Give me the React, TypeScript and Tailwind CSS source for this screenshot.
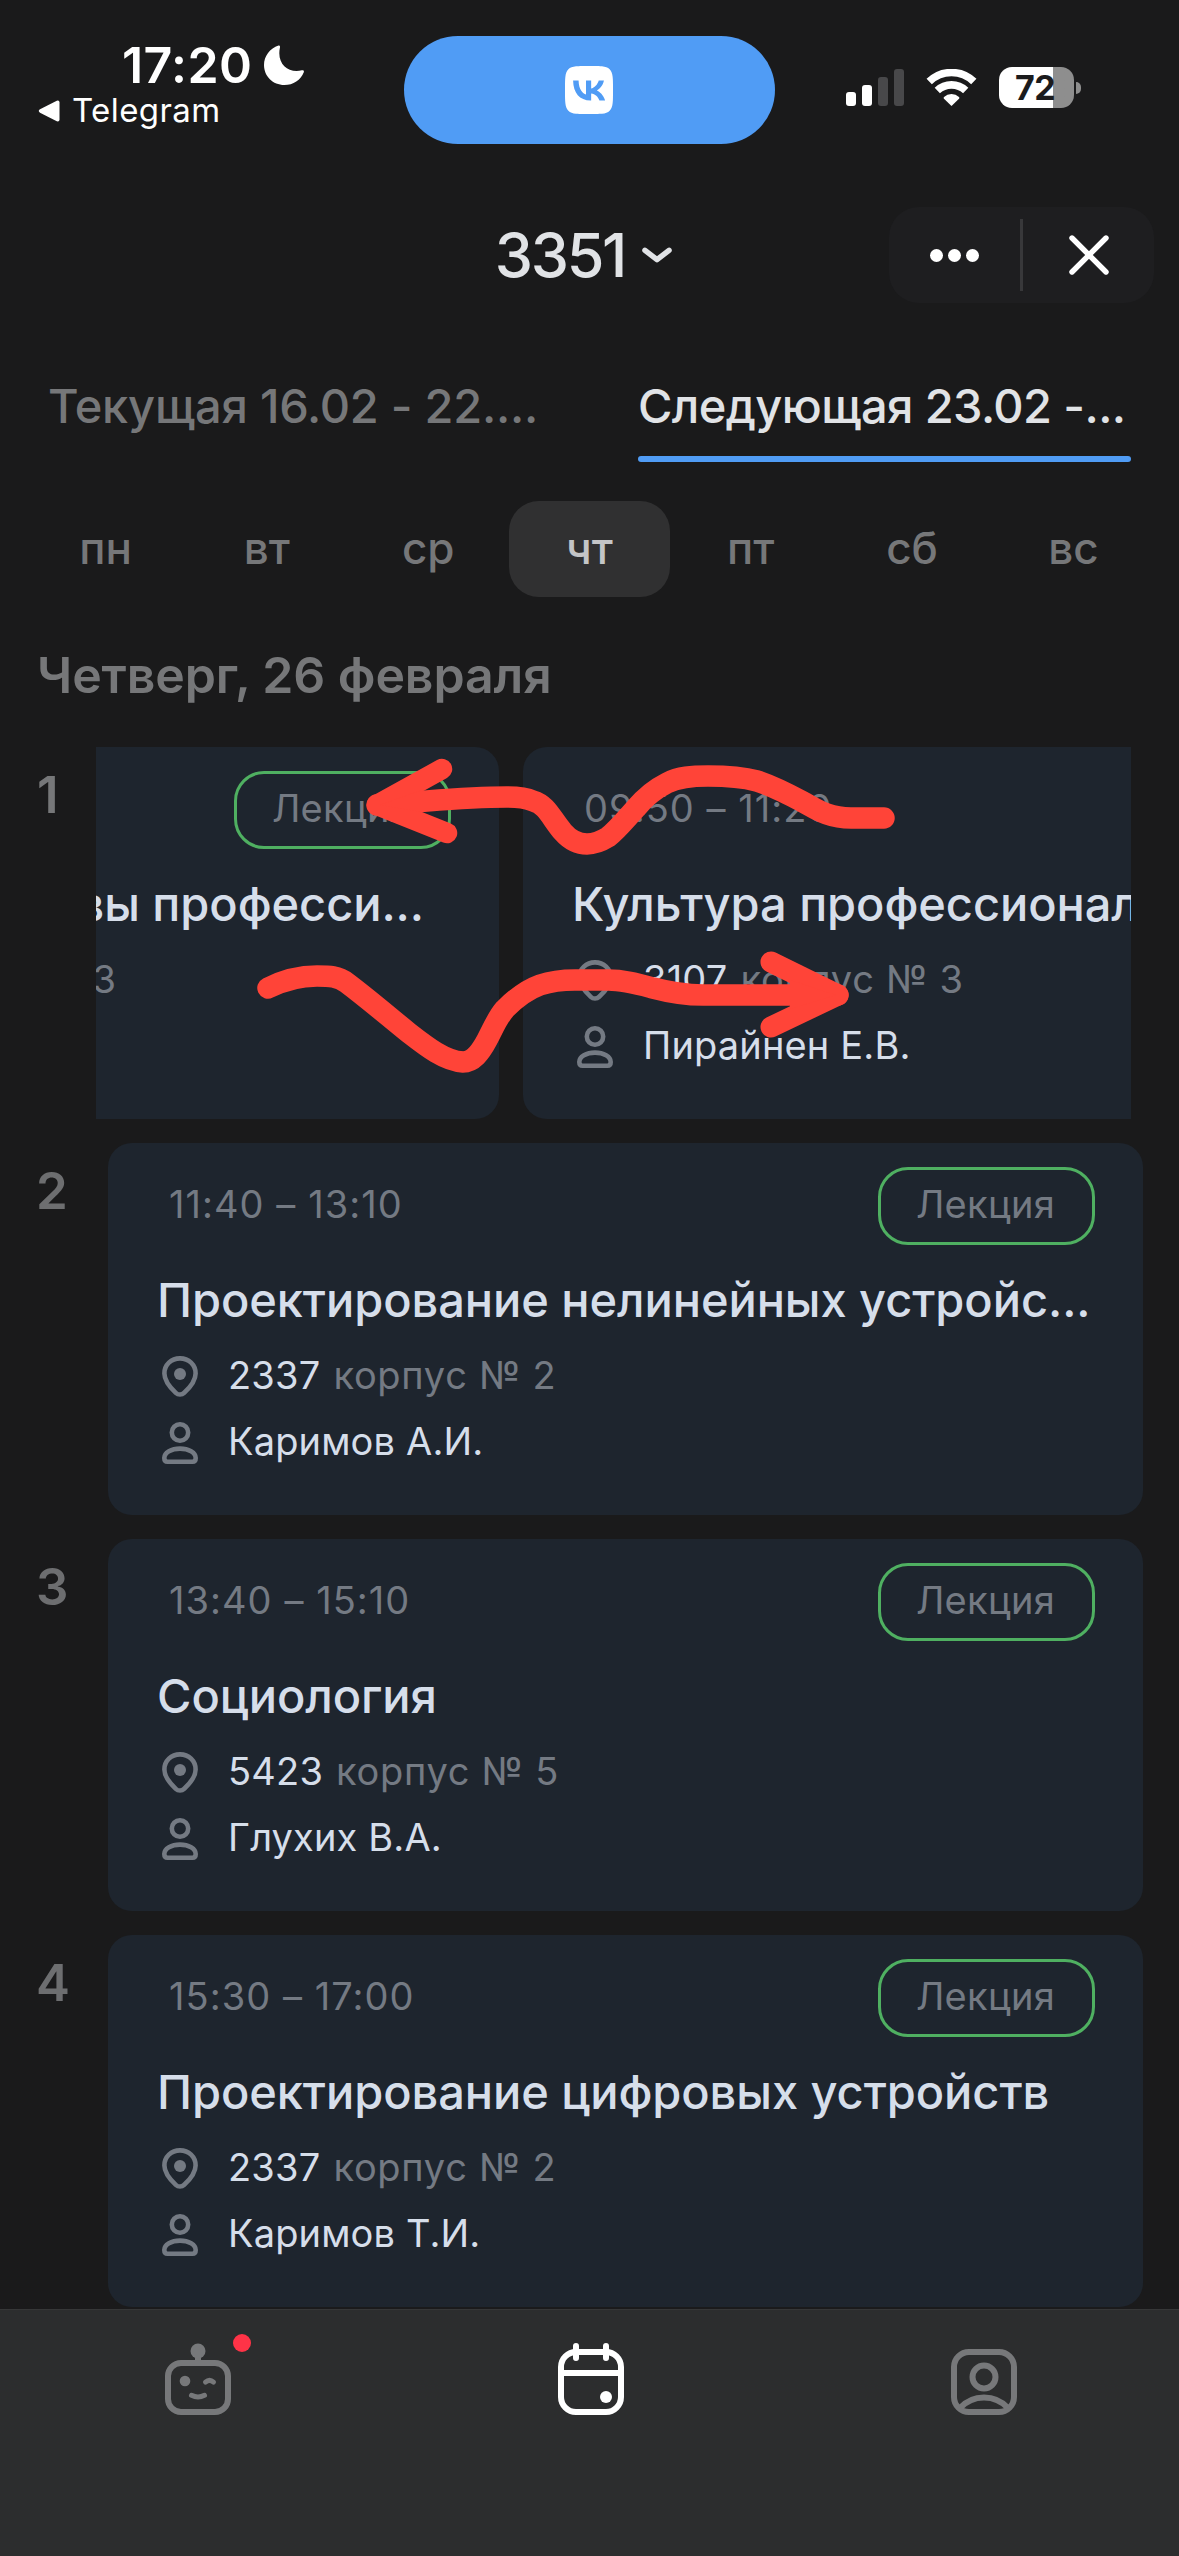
import { SiVk } from 'react-icons/si';

interface Lesson {
  time: string;
  kind: string;
  title: string;
  room: string;
  building: string;
  teacher: string;
  clipped?: boolean;
}

interface Slot {
  number: number;
  lessons: Lesson[];
}

const weekDays = ['пн', 'вт', 'ср', 'чт', 'пт', 'сб', 'вс'];
const activeDay = 'чт';

const slots: Slot[] = [
  {
    number: 1,
    lessons: [
      {
        time: '09:50 – 11:20',
        kind: 'Лекция',
        title: 'Психологические основы професси...',
        room: '3102, 3109, 3110',
        building: 'корпус № 3',
        teacher: 'Пирайнен Е.В.',
        clipped: true,
      },
      {
        time: '09:50 – 11:20',
        kind: 'Лекция',
        title: 'Культура профессионального общения',
        room: '3107',
        building: 'корпус № 3',
        teacher: 'Пирайнен Е.В.',
      },
    ],
  },
  {
    number: 2,
    lessons: [
      {
        time: '11:40 – 13:10',
        kind: 'Лекция',
        title: 'Проектирование нелинейных устройс...',
        room: '2337',
        building: 'корпус № 2',
        teacher: 'Каримов А.И.',
      },
    ],
  },
  {
    number: 3,
    lessons: [
      {
        time: '13:40 – 15:10',
        kind: 'Лекция',
        title: 'Социология',
        room: '5423',
        building: 'корпус № 5',
        teacher: 'Глухих В.А.',
      },
    ],
  },
  {
    number: 4,
    lessons: [
      {
        time: '15:30 – 17:00',
        kind: 'Лекция',
        title: 'Проектирование цифровых устройств',
        room: '2337',
        building: 'корпус № 2',
        teacher: 'Каримов Т.И.',
      },
    ],
  },
];

function PinIcon() {
  return (
    <svg viewBox="0 0 48 48" className="w-12 h-12 shrink-0" fill="none">
      <path
        d="M24 5.4c8.8 0 15.6 6.500 15.600 15 0 6.600-4.800 13.200-11.400 19.400a6.100 6.100 0 0 1-8.400 0C13.200 33.600 8.400 27 8.400 20.400c0-8.500 6.800-15 15.600-15z"
        stroke="#747a83"
        strokeWidth="4.600"
      />
      <circle cx="24" cy="21" r="6" fill="#747a83" />
    </svg>
  );
}

function PersonIcon() {
  return (
    <svg viewBox="0 0 48 48" className="w-12 h-12 shrink-0" fill="none" stroke="#747a83" strokeWidth="4.600">
      <circle cx="24" cy="13.500" r="8.200" />
      <path d="M24 29.600c8.600 0 15.700 4 15.700 9.400 0 2.500-1.200 3.700-3.200 3.700h-25c-2 0-3.200-1.200-3.200-3.700 0-5.400 7.100-9.400 15.700-9.400z" />
    </svg>
  );
}

function StatusBar() {
  return (
    <div className="h-[180px] shrink-0 flex justify-between text-white">
      <div className="w-[404px] pt-[35px] pl-[38px]">
        <div className="flex items-center gap-3 pl-[84px] h-[60px]">
          <span className="text-[50px] leading-none font-semibold tracking-[0.4px]">17:20</span>
          <svg viewBox="0 0 40 40" className="w-10 h-10">
            <path
              d="M14.500.5C6 3.500 0 11 0 20c0 11.300 9 20 20.300 20 9 0 16.500-5 19.500-12.800.5-1.300-.5-2.300-1.900-1.900-13.500 3.500-25.400-6.500-22-22.500.4-1.700-.3-2.700-1.400-2.300z"
              fill="#fff"
            />
          </svg>
        </div>
        <div className="flex items-center gap-3 h-[32px]">
          <svg viewBox="0 0 22 22" className="w-[22px] h-[22px]">
            <path d="M2 9.300 18.800.7Q21.500 0 21.500 2.500v17q0 2.500-2.700 1.800L2 12.700Q-.5 11 2 9.300z" fill="#fff" />
          </svg>
          <span className="text-[33px] leading-none tracking-[0.4px] pb-0.5">Telegram</span>
        </div>
      </div>

      <div className="mt-9 w-[371px] h-[108px] pr-0.5 rounded-full bg-[#509cf5] flex items-center justify-center">
        <SiVk className="w-12 h-12 text-white" />
      </div>

      <div className="w-[404px] pl-[71px] pt-[67px] flex items-start">
        <svg viewBox="0 0 58 37" className="mt-[2px] w-[58px] h-[37px]">
          <rect x="0" y="23" width="10" height="14" rx="3" fill="#fff" />
          <rect x="16" y="16" width="10" height="21" rx="3" fill="#fff" />
          <rect x="32" y="8" width="10" height="29" rx="3" fill="#48484a" />
          <rect x="48" y="0" width="10" height="37" rx="3" fill="#48484a" />
        </svg>
        <svg viewBox="0 0 51 37" className="ml-[22px] mt-[2px] w-[51px] h-[37px]" fill="none" stroke="#fff">
          <path d="M3.200 12.600a32 32 0 0 1 44.600 0" strokeWidth="7.600" />
          <path d="M11.300 21.600a20.500 20.500 0 0 1 28.400 0" strokeWidth="7.600" />
          <path d="M25.500 37 18 29.700a1.300 1.300 0 0 1 0-1.800 11 11 0 0 1 15 0 1.300 1.300 0 0 1 0 1.800z" fill="#fff" stroke="none" />
        </svg>
        <div className="ml-[22px] flex items-center gap-[2px]">
          <div className="w-[75px] h-[41px] pr-[3px] rounded-[13px] overflow-hidden bg-linear-to-r from-white from-[72%] to-[#8e8e8e] to-[72%] flex items-center justify-center">
            <span className="text-[34px] leading-none font-bold tracking-[-0.5px] text-[#1b1b1d]">72</span>
          </div>
          <div className="w-[5px] h-3 rounded-r-full bg-[#8e8e8e]" />
        </div>
      </div>
    </div>
  );
}

function Header() {
  return (
    <div className="h-[150px] shrink-0 grid grid-cols-[404px_1fr_404px] text-[#e1e3e6]">
      <div />
      <div className="h-[150px] flex items-center justify-center gap-[17px] pr-3">
        <span className="text-[61px] leading-none font-medium tracking-[-2.300px]">3351</span>
        <svg viewBox="0 0 30 16" className="w-[30px] h-4" fill="none">
          <path d="M3 3.300 15 12.700 27 3.300" stroke="#e1e3e6" strokeWidth="5.500" strokeLinecap="round" strokeLinejoin="round" />
        </svg>
      </div>
      <div className="flex items-center justify-end pr-[25px]">
        <div className="w-[265px] h-24 rounded-[30px] bg-[#1e1e20] flex items-center">
          <div className="w-[131px] flex justify-center gap-[5px]">
            <span className="w-[13px] h-[13px] rounded-full bg-white" />
            <span className="w-[13px] h-[13px] rounded-full bg-white" />
            <span className="w-[13px] h-[13px] rounded-full bg-white" />
          </div>
          <div className="w-[3px] h-[72px] bg-[#38383a]" />
          <div className="flex-1 flex justify-center">
            <svg viewBox="0 0 40 40" className="w-10 h-10">
              <path d="M3 3l34 34M37 3 3 37" stroke="#fff" strokeWidth="5.400" strokeLinecap="round" />
            </svg>
          </div>
        </div>
      </div>
    </div>
  );
}

function WeekTabs() {
  return (
    <div className="shrink-0 h-[132px] grid grid-cols-2 gap-[97px] pl-12 pr-12 text-[47px] font-medium">
      <div className="pt-[46px] whitespace-nowrap">
        <div className="h-[60px] leading-[60px] text-[#767779] tracking-[-0.25px]">Текущая 16.02 - 22....</div>
      </div>
      <div className="pt-[46px] whitespace-nowrap">
        <div className="h-[60px] leading-[60px] text-[#e1e3e6] tracking-[-0.6px]">Следующая 23.02 -...</div>
        <div className="mt-5 h-[6px] rounded-full bg-[#509cf5]" />
      </div>
    </div>
  );
}

function DayPicker() {
  return (
    <div className="shrink-0 mt-[39px] px-[25px] grid grid-cols-7 h-24 text-[44px] font-medium">
      {weekDays.map((day) => (
        <div
          key={day}
          className={
            day === activeDay
              ? 'h-24 rounded-[30px] bg-[#303031] text-[#c4c5c7] flex items-center justify-center pb-0.5'
              : 'h-24 text-[#767779] flex items-center justify-center pb-0.5'
          }
        >
          {day}
        </div>
      ))}
    </div>
  );
}

function LessonCard({ lesson }: { lesson: Lesson }) {
  return (
    <div className="w-[1035px] h-[372px] shrink-0 rounded-3xl bg-[#1e252e] px-12 pt-6 whitespace-nowrap overflow-hidden">
      <div className="flex justify-between items-center text-[38px] text-[#747a83]">
        <span className="pl-[13px] pb-[3px] tracking-[1.05px]">{lesson.time}</span>
        <span className="w-[217px] h-[78px] pb-[3px] pr-0.5 rounded-[30px] border-[3px] border-[#4fb061] flex items-center justify-center tracking-[0.3px]">
          {lesson.kind}
        </span>
      </div>
      <div
        className={
          lesson.clipped
            ? 'mt-[25px] pr-[27px] h-[60px] leading-[60px] text-[47px] font-medium text-[#d6deea] tracking-[-0.06px] flex justify-end'
            : 'mt-[25px] pl-px h-[60px] leading-[60px] text-[47px] font-medium text-[#d6deea] tracking-[-0.06px]'
        }
      >
        {lesson.title}
      </div>
      <div className="mt-[23px] h-12 flex items-center text-[38px]">
        <PinIcon />
        <span className="ml-6 pb-[3px] text-[#d6deea] tracking-[0.2px]">{lesson.room}</span>
        <span className="ml-[13px] pb-[3px] text-[#747a83] tracking-[0.7px]">{lesson.building}</span>
      </div>
      <div className="mt-[18px] h-12 flex items-center text-[38px]">
        <PersonIcon />
        <span className="ml-6 pb-[3px] text-[#d6deea] tracking-[0.15px]">{lesson.teacher}</span>
      </div>
    </div>
  );
}

// hand-drawn swipe hints over the first row
function SwipeArrows() {
  return (
    <svg
      viewBox="240 740 680 360"
      className="absolute left-[240px] -top-[7px] w-[680px] h-[360px]"
      fill="none"
      stroke="#ff4438"
      strokeLinecap="round"
      strokeLinejoin="round"
    >
      <path
        d="M884 818H851C828 818 816 809 803 802C788 794 775 787 757 781C742 777 726 776 708 776C692 776 679 777 667 783C655 789 646 796 636 808C625 820 617 830 608 837C600 842 594 844 587 844C578 844 570 840 563 832C551 818 547 805 533 801C524 797 515 797 507 797C480 797 452 799 427 801L377 805"
        strokeWidth="21.500"
      />
      <path d="M442 769 377 805 447 833" strokeWidth="20.500" />
      <path d="M380 805 422 790V812z" fill="#ff4438" stroke="none" />
      <path
        d="M268 988C284 980 300 976 317 976C329 976 338 976 347 983C367 998 388 1016 409 1033C427 1047 445 1061 463 1062C473 1062 480 1053 487 1040C493 1029 497 1018 505 1009C515 999 526 990 540 985C552 981 563 980 575 980H608C624 980 638 984 653 988C672 993 684 995 703 995H838"
        strokeWidth="21.500"
      />
      <path d="M771 962 838 995 771 1027" strokeWidth="21" />
      <path d="M836 995 790 980V1009z" fill="#ff4438" stroke="none" />
    </svg>
  );
}

function SlotRow({ slot }: { slot: Slot }) {
  const swiped = slot.lessons.length > 1;
  return (
    <div className="relative flex h-[372px]">
      <div
        className={
          swiped
            ? 'w-24 shrink-0 pl-[37px] pt-[18px] leading-[60px] text-[51px] font-semibold text-[#767779]'
            : 'w-[108px] shrink-0 pl-[36px] pt-[18px] leading-[60px] text-[51px] font-semibold text-[#6d6e70]'
        }
      >
        {slot.number}
      </div>
      {swiped ? (
        <div className="w-[1035px] overflow-hidden">
          <div className="flex gap-6 -ml-[632px]">
            {slot.lessons.map((lesson, i) => (
              <LessonCard key={i} lesson={lesson} />
            ))}
          </div>
        </div>
      ) : (
        <LessonCard lesson={slot.lessons[0]} />
      )}
      {swiped && <SwipeArrows />}
    </div>
  );
}

function BottomNav() {
  return (
    <div className="h-[247px] shrink-0 bg-[#2c2d2e] border-t border-[#363738] grid grid-cols-3 pt-[30px]">
      <div className="flex justify-center">
        <div className="relative w-24 h-[84px] ml-[3px]">
          <svg viewBox="0 0 96 84" className="w-24 h-[84px]" fill="none" stroke="#77787a">
            <rect x="18" y="23" width="60" height="49" rx="13" strokeWidth="6" />
            <path d="M48 12v12" strokeWidth="6" />
            <circle cx="48" cy="11" r="7.500" fill="#77787a" stroke="none" />
            <circle cx="35" cy="41" r="5.300" fill="#77787a" stroke="none" />
            <path d="M55.500 42.200q4-3.600 8 0" strokeWidth="5" strokeLinecap="round" />
            <path d="M41.500 55.300q6.500 3.400 13 0" strokeWidth="5" strokeLinecap="round" />
          </svg>
          <span className="absolute left-[83px] -top-[6px] w-[18px] h-[18px] rounded-full bg-[#ff3347]" />
        </div>
      </div>
      <div className="flex justify-center">
        <svg viewBox="0 0 84 84" className="w-[84px] h-[84px] ml-[3px]" fill="none" stroke="#fff" strokeWidth="6">
          <rect x="12" y="12" width="60" height="60" rx="15" />
          <path d="M12 33h60" />
          <path d="M27 6v12M57 6v12" strokeLinecap="round" />
          <circle cx="57" cy="57" r="6" fill="#fff" stroke="none" />
        </svg>
      </div>
      <div className="flex justify-center">
        <svg viewBox="0 0 84 84" className="w-[84px] h-[84px] ml-[3px]" fill="none" stroke="#77787a" strokeWidth="6">
          <rect x="12" y="12" width="60" height="60" rx="15" />
          <circle cx="42" cy="37" r="11.500" />
          <path d="M18 68c13-14 35-14 48 0" />
        </svg>
      </div>
    </div>
  );
}

export default function App() {
  return (
    <div className="w-[1179px] h-[2556px] overflow-hidden flex flex-col bg-[#1a1a1b] font-['Inter','Noto_Sans',sans-serif]">
      <StatusBar />
      <Header />
      <WeekTabs />
      <DayPicker />
      <h2 className="shrink-0 mt-[48px] pl-[37px] h-[60px] leading-[60px] text-[50px] font-semibold text-[#767779] tracking-[-0.1px]">
        Четверг, 26 февраля
      </h2>
      <div className="mt-[42px] flex-1 min-h-0 overflow-hidden flex flex-col gap-6">
        {slots.map((slot) => (
          <SlotRow key={slot.number} slot={slot} />
        ))}
      </div>
      <BottomNav />
    </div>
  );
}
